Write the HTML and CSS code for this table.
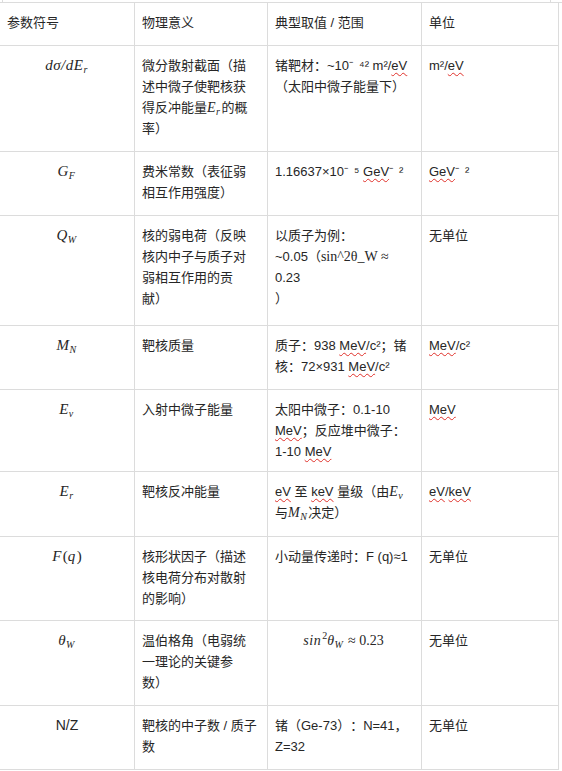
FILE: index.html
```html
<!DOCTYPE html>
<html lang="zh">
<head>
<meta charset="utf-8">
<title>参数表</title>
<link rel="stylesheet" href="styles.css">
</head>
<body>
<div class="edge"></div>
<div class="sheet">
<table class="params">
  <colgroup>
    <col class="c-sym"><col class="c-mean"><col class="c-val"><col class="c-unit">
  </colgroup>
  <tr class="r0">
    <td>参数符号</td>
    <td>物理意义</td>
    <td>典型取值 / 范围</td>
    <td>单位</td>
  </tr>
  <tr class="r1">
    <td class="sym"><span class="mi">dσ/dE<sub>r</sub></span></td>
    <td>微分散射截面（描述中微子使靶核获得反冲能量<span class="mi">E<sub>r</sub></span>的概率）</td>
    <td>锗靶材：~10<span class="gap">⁻</span>⁴² m²/<span class="sp">eV</span>（太阳中微子能量下）</td>
    <td>m²/<span class="sp">eV</span></td>
  </tr>
  <tr class="r2">
    <td class="sym"><span class="mi">G<sub>F</sub></span></td>
    <td>费米常数（表征弱相互作用强度）</td>
    <td>1.16637×10<span class="gap">⁻</span>⁵ <span class="sp">GeV</span><span class="gap">⁻</span>²</td>
    <td><span class="sp">GeV</span><span class="gap">⁻</span>²</td>
  </tr>
  <tr class="r3">
    <td class="sym"><span class="mi">Q<sub>W</sub></span></td>
    <td>核的弱电荷（反映核内中子与质子对弱相互作用的贡献）</td>
    <td>以质子为例：<br>~0.05（<span class="tx">sin^2θ_W ≈</span><br>0.23<br>）</td>
    <td>无单位</td>
  </tr>
  <tr class="r4">
    <td class="sym"><span class="mi">M<sub>N</sub></span></td>
    <td>靶核质量</td>
    <td>质子：938 <span class="sp">MeV</span>/c²；锗核：72×931 <span class="sp">MeV</span>/c²</td>
    <td><span class="sp">MeV</span>/c²</td>
  </tr>
  <tr class="r5">
    <td class="sym"><span class="mi">E<sub>ν</sub></span></td>
    <td>入射中微子能量</td>
    <td>太阳中微子：0.1-10 <span class="sp">MeV</span>；反应堆中微子：1-10 <span class="sp">MeV</span></td>
    <td><span class="sp">MeV</span></td>
  </tr>
  <tr class="r6">
    <td class="sym"><span class="mi">E<sub>r</sub></span></td>
    <td>靶核反冲能量</td>
    <td><span class="sp">eV</span> 至 <span class="sp">keV</span> 量级（由<span class="mi">E<sub>ν</sub></span>与<span class="mi">M<sub>N</sub></span>决定）</td>
    <td><span class="sp">eV</span>/<span class="sp">keV</span></td>
  </tr>
  <tr class="r7">
    <td class="sym"><span class="mi">F</span><span class="mu">(</span><span class="mi">q</span><span class="mu">)</span></td>
    <td>核形状因子（描述核电荷分布对散射的影响）</td>
    <td>小动量传递时：F (q)≈1</td>
    <td>无单位</td>
  </tr>
  <tr class="r8">
    <td class="sym"><span class="mi">θ<sub>W</sub></span></td>
    <td>温伯格角（电弱统一理论的关键参数）</td>
    <td class="center"><span class="mi">sin</span><sup>2</sup><span class="mi">θ<sub>W</sub></span> <span class="mu">≈ 0.23</span></td>
    <td>无单位</td>
  </tr>
  <tr class="r9">
    <td class="sym"><span class="nz">N/Z</span></td>
    <td>靶核的中子数 / 质子数</td>
    <td>锗（Ge-73）：N=41，Z=32</td>
    <td>无单位</td>
  </tr>
</table>
</div>
</body>
</html>
```
FILE: styles.css
```css
html, body {
  margin: 0;
  padding: 0;
  background: #ffffff;
}
body {
  font-family: "Liberation Sans", "Noto Sans CJK SC", sans-serif;
  font-size: 13px;
  color: #262626;
  text-spacing-trim: space-all;
}
.edge {
  margin-left: 2px;
  width: 547px;
  height: 2px;
  border-left: 1px solid #dcdcdc;
  border-right: 1px solid #dcdcdc;
}
.sheet {
  border-top: 1px solid #dcdcdc;
  overflow: hidden;
}
.params {
  border-collapse: collapse;
  table-layout: fixed;
  width: 559px;
  margin-left: -1px;
}
.c-sym { width: 135px; }
.c-mean { width: 133px; }
.c-val { width: 154px; }
.c-unit { width: 137px; }
.params td {
  border: 1px solid #dcdcdc;
  vertical-align: top;
  padding: 9px 9px 9px 7px;
  line-height: 21px;
  word-break: normal;
}
.params tr:first-child td {
  border-top: none;
}
.params td.sym {
  text-align: center;
  padding-left: 0;
  padding-right: 0;
}
.params td.center {
  text-align: center;
}
.r0 { height: 42px; }
.r1 { height: 106px; }
.r2 { height: 64px; }
.r3 { height: 110px; }
.r4 { height: 64px; }
.r5 { height: 81px; }
.r6 { height: 65px; }
.r7 { height: 84px; }
.r8 { height: 85px; }
.r9 { height: 64px; }
.mi {
  font-family: "Liberation Serif", "DejaVu Serif", serif;
  font-style: italic;
  font-size: 14px;
  letter-spacing: 0.5px;
  padding-right: 1px;
}
.sym .mi, .sym .mu {
  font-size: 15px;
}
.mu {
  font-family: "Liberation Serif", "DejaVu Serif", serif;
  font-size: 14px;
}
.mi sub {
  font-size: 10px;
  line-height: 0;
  vertical-align: -3px;
}
.params sup {
  font-family: "Liberation Serif", serif;
  font-size: 10px;
  line-height: 0;
  vertical-align: 6px;
}
.tx {
  font-family: "Liberation Serif", serif;
  font-size: 14px;
}
.nz {
  font-size: 14px;
}
.gap {
  margin-right: 6px;
}
.sp {
  text-decoration: underline wavy #e0302a;
  text-decoration-thickness: 1px;
  text-underline-offset: 2px;
  text-decoration-skip-ink: none;
}
```
